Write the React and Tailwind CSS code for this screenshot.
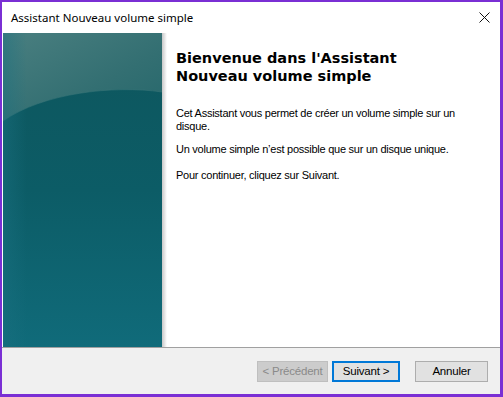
import React from "react";

function SidePanel() {
  return (
    <div className="relative w-[159px] h-full shrink-0">
      <svg width="159" height="314" viewBox="0 0 159 314" className="block">
        <defs>
          <linearGradient id="bg" x1="0" y1="0" x2="0" y2="1">
            <stop offset="0" stopColor="#0e565d" />
            <stop offset="0.5" stopColor="#0c5c66" />
            <stop offset="1" stopColor="#106b7a" />
          </linearGradient>
          <linearGradient id="top" x1="0" y1="0" x2="1" y2="1">
            <stop offset="0" stopColor="#4a7f80" />
            <stop offset="0.6" stopColor="#336f72" />
            <stop offset="1" stopColor="#25676b" />
          </linearGradient>
          <linearGradient id="side" x1="0" y1="0" x2="1" y2="0">
            <stop offset="0" stopColor="#1a7080" stopOpacity="0.5" />
            <stop offset="0.15" stopColor="#1a7080" stopOpacity="0" />
          </linearGradient>
        </defs>
        <rect width="159" height="314" fill="url(#bg)" />
        <path d="M0 0 H159 V59 C110 52 40 60 0 88 Z" fill="url(#top)" />
        <path d="M0 88 C40 60 110 52 159 59" fill="none" stroke="#3f7a7c" strokeWidth="1" opacity="0.5" />
        <rect width="159" height="314" fill="url(#side)" />
      </svg>
      <div className="absolute top-0 right-[-5px] w-[5px] h-full bg-gradient-to-r from-[#c8c8c8] to-white" />
    </div>
  );
}

function Btn({ children, disabled, primary }) {
  return (
    <div
      className={
        "h-[21px] flex items-center justify-center text-[11.5px] tracking-[-0.2px] " +
        (disabled
          ? "w-[71px] bg-[#cccccc] border border-[#bfbfbf] text-[#8a8a8a]"
          : primary
          ? "w-[68px] bg-[#e1e1e1] border-2 border-[#0078d7] text-black"
          : "w-[73px] bg-[#e1e1e1] border border-[#adadad] text-black")
      }
    >
      {children}
    </div>
  );
}

export default function App() {
  return (
    <div
      className="w-[503px] h-[397px] bg-[#7a2fd4] pl-[2px] pt-[2px] pr-[3px] pb-[3px]"
      style={{ fontFamily: '"Liberation Sans", Arial, sans-serif' }}
    >
      <div className="w-full h-full bg-white flex flex-col">
        <div className="h-[31px] flex items-center justify-between pl-[9px] pr-[10px] shrink-0">
          <span
            className="text-[11.5px] text-black"
            style={{ fontFamily: '"Noto Sans", "Open Sans", sans-serif' }}
          >
            Assistant Nouveau volume simple
          </span>
          <svg width="11" height="11" viewBox="0 0 11 11">
            <path d="M0.5 0.5 L10.5 10.5 M10.5 0.5 L0.5 10.5" stroke="#111" strokeWidth="1" />
          </svg>
        </div>
        <div className="h-[314px] flex shrink-0 pl-px">
          <SidePanel />
          <div className="flex-1 pl-[14px] pt-[16px]">
            <h1
              className="text-[14.5px] font-bold leading-[18px] text-black"
              style={{ fontFamily: '"DejaVu Sans", Verdana, sans-serif' }}
            >
              Bienvenue dans l'Assistant
              <br />
              Nouveau volume simple
            </h1>
            <div className="mt-[22px] text-[11px] leading-[13px] tracking-[-0.25px] text-black pr-[20px]">
              <p>Cet Assistant vous permet de créer un volume simple sur un disque.</p>
              <p className="mt-[10px]">Un volume simple n’est possible que sur un disque unique.</p>
              <p className="mt-[13px]">Pour continuer, cliquez sur Suivant.</p>
            </div>
          </div>
        </div>
        <div className="h-px bg-[#a0a0a0] shrink-0" />
        <div className="flex-1 bg-[#f0f0f0] flex items-start justify-end pt-[13px] pr-[12px]">
          <Btn disabled>&lt; Précédent</Btn>
          <div className="ml-[4px]">
            <Btn primary>Suivant &gt;</Btn>
          </div>
          <div className="ml-[15px]">
            <Btn>Annuler</Btn>
          </div>
        </div>
      </div>
    </div>
  );
}
